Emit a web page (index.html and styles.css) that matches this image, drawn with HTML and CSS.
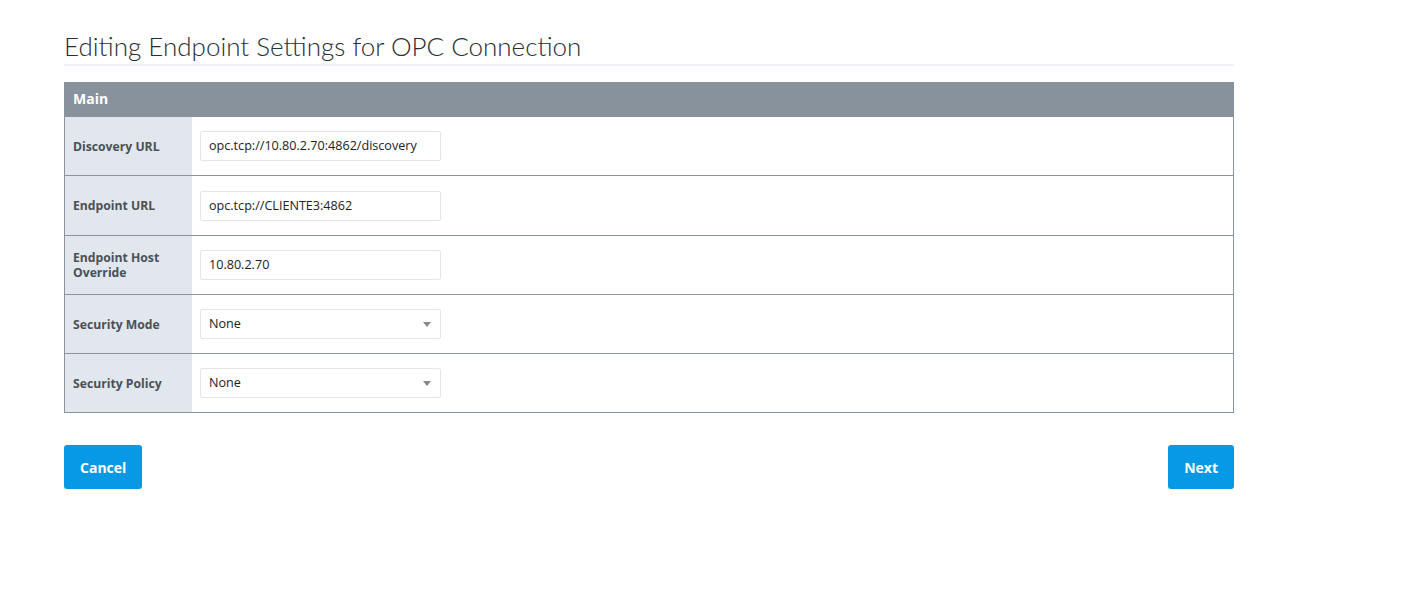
FILE: index.html
```html
<!DOCTYPE html>
<html>
<head>
<meta charset="utf-8">
<link rel="stylesheet" href="styles.css">
</head>
<body>
<div class="page">
  <h1 class="title">Editing Endpoint Settings for OPC Connection</h1>
  <div class="panel">
    <div class="panel-head">Main</div>
    <div class="row">
      <div class="label">Discovery URL</div>
      <div class="field"><div class="input">opc.tcp://10.80.2.70:4862/discovery</div></div>
    </div>
    <div class="row">
      <div class="label">Endpoint URL</div>
      <div class="field"><div class="input">opc.tcp://CLIENTE3:4862</div></div>
    </div>
    <div class="row">
      <div class="label">Endpoint Host Override</div>
      <div class="field"><div class="input">10.80.2.70</div></div>
    </div>
    <div class="row">
      <div class="label">Security Mode</div>
      <div class="field"><div class="input select">None<span class="caret"></span></div></div>
    </div>
    <div class="row">
      <div class="label">Security Policy</div>
      <div class="field"><div class="input select">None<span class="caret"></span></div></div>
    </div>
  </div>
  <div class="actions">
    <button class="btn">Cancel</button>
    <button class="btn">Next</button>
  </div>
</div>
</body>
</html>
```
FILE: styles.css
```css
html, body { margin: 0; padding: 0; background: #fff; }
body { font-family: "Open Sans", "Liberation Sans", sans-serif; }
.page { width: 1170px; margin-left: 64px; padding-top: 29px; }
.title {
  margin: 0;
  font-family: Lato, "Open Sans", sans-serif;
  font-weight: 300;
  font-size: 26px;
  line-height: 34px;
  color: #2a2e33;
  padding-bottom: 1px;
  border-bottom: 2px solid #eef2f6;
}
.panel { margin-top: 16px; border: 1px solid #8a949d; border-top: none; }
.panel-head {
  background: #87929c;
  color: #fff;
  font-weight: 700;
  font-size: 14px;
  height: 34px;
  line-height: 34px;
  padding-left: 9px;
  margin: 0 -1px;
}
.row { display: flex; border-top: 1px solid #8a949d; min-height: 58px; }
.row:first-of-type { border-top: none; }
.row:nth-of-type(3) { min-height: 59px; }
.label {
  width: 111px;
  background: #e1e7ed;
  padding: 0 8px;
  font-size: 12.2px;
  font-weight: 700;
  color: #4a5057;
  display: flex;
  align-items: center;
  line-height: 15px;
}
.field { display: flex; align-items: center; padding-left: 8px; }
.input {
  width: 231px;
  height: 28px;
  border: 1px solid #e2e6ea;
  border-radius: 2px;
  padding-left: 8px;
  font-size: 12.6px;
  color: #222;
  line-height: 28px;
  position: relative;
  box-sizing: content-box;
}
.caret {
  position: absolute;
  right: 9px;
  top: 12px;
  width: 0; height: 0;
  border-left: 4px solid transparent;
  border-right: 4px solid transparent;
  border-top: 5px solid #888;
}
.actions { display: flex; justify-content: space-between; margin-top: 32px; }
.btn {
  background: #0799e5;
  color: #fff;
  border: none;
  border-radius: 3px;
  height: 44px;
  padding: 0 16px;
  font-family: "Open Sans", sans-serif;
  font-weight: 700;
  font-size: 14px;
}
```
